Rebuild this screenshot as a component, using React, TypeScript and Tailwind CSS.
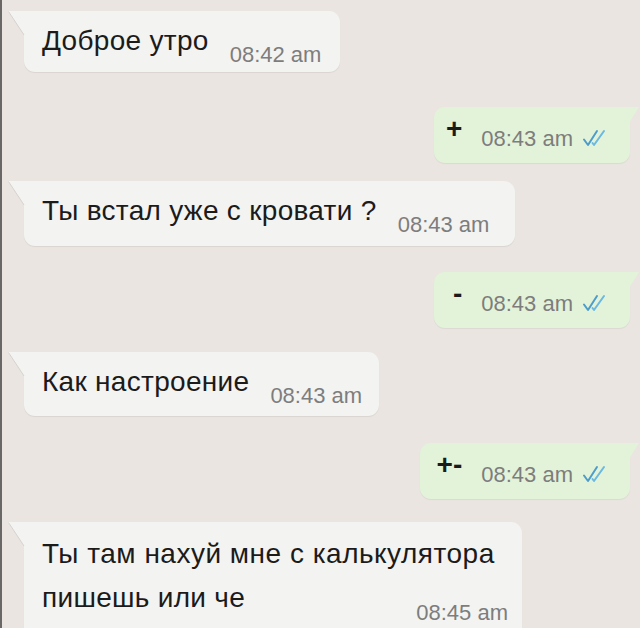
import React from "react";

function Checks() {
  return (
    <svg width="26" height="18" viewBox="0 0 26 18" fill="none" className="shrink-0">
      <path d="M2 10.5 L6 16 L15 2" stroke="#4e9cc9" strokeWidth="2" strokeLinecap="round" strokeLinejoin="round" />
      <path d="M10.5 14 L12 16 L22 2" stroke="#6bb8e0" strokeWidth="2" strokeLinecap="round" strokeLinejoin="round" />
    </svg>
  );
}

function Tail() {
  return (
    <svg width="17" height="25" viewBox="0 0 17 25" className="absolute left-[-16px] top-0">
      <path d="M0 0 L17 0 L17 25 Z" fill="#f3f3f2" />
      <path d="M0.5 0.5 L16 24" stroke="#d6d2cf" strokeWidth="1" />
    </svg>
  );
}

function Left({
  text,
  time,
  h,
  mt,
  pr,
}: {
  text: string;
  time: string;
  h: string;
  mt: string;
  pr: string;
}) {
  return (
    <div className={`flex pl-[22px] ${mt}`}>
      <div
        className={`relative flex items-start bg-[#f3f3f2] rounded-[11px] rounded-tl-none pl-[18px] pt-[14px] ${pr} ${h} shadow-[0_1px_1px_rgba(0,0,0,0.07)]`}
      >
        <Tail />
        <span className="text-[28px] leading-[32px] tracking-[0.3px] text-[#1b1b1b] whitespace-nowrap">{text}</span>
        <span className="ml-[21px] mt-[18px] text-[22px] leading-[24px] text-[#7d7d7d] whitespace-nowrap">
          {time}
        </span>
      </div>
    </div>
  );
}

function Right({ sign, mt, pl }: { sign: string; mt: string; pl: string }) {
  return (
    <div className={`flex justify-end pr-[10px] ${mt}`}>
      <div
        className={`relative flex items-start h-[56px] bg-[#e3f3d9] rounded-[11px] rounded-tr-none pt-[8px] pr-[22px] ${pl} shadow-[0_1px_1px_rgba(0,0,0,0.06)]`}
      >
        <svg width="10" height="16" viewBox="0 0 10 16" className="absolute right-[-9px] top-0">
          <path d="M0 0 L10 0 L0 16 Z" fill="#e3f3d9" />
        </svg>
        <span className="text-[28px] leading-[27px] font-bold text-[#1b1b1b] whitespace-nowrap">{sign}</span>
        <span className="ml-[19px] mt-[12px] text-[22px] leading-[24px] text-[#7d7d7d] whitespace-nowrap">
          08:43 am
        </span>
        <span className="ml-[9px] mt-[14px]">
          <Checks />
        </span>
      </div>
    </div>
  );
}

export default function App() {
  return (
    <div
      className="w-[640px] h-[628px] overflow-hidden bg-[#eae5e1] border-l-[2px] border-[#6a6866] flex flex-col pt-[11px]"
      style={{ fontFamily: '"Liberation Sans", Arial, sans-serif' }}
    >
      <Left text="Доброе утро" time="08:42 am" h="h-[61px]" mt="mt-0" pr="pr-[19px]" />
      <Right sign="+" mt="mt-[35px]" pl="pl-[12px]" />
      <Left text="Ты встал уже с кровати ?" time="08:43 am" h="h-[65px]" mt="mt-[18px]" pr="pr-[26px]" />
      <Right sign="-" mt="mt-[26px]" pl="pl-[19px]" />
      <Left text="Как настроение" time="08:43 am" h="h-[64px]" mt="mt-[24px]" pr="pr-[17px]" />
      <Right sign="+-" mt="mt-[27px]" pl="pl-[17px]" />
      <div className="flex pl-[22px] mt-[23px]">
        <div className="relative flex flex-col w-[498px] bg-[#f3f3f2] rounded-[11px] rounded-tl-none pl-[18px] pr-[14px] pt-[10px] pb-[20px] shadow-[0_1px_1px_rgba(0,0,0,0.07)]">
          <Tail />
          <span className="text-[28px] leading-[44px] tracking-[0.5px] text-[#1b1b1b] whitespace-nowrap">
            Ты там нахуй мне с калькулятора
          </span>
          <div className="flex items-start justify-between">
            <span className="text-[28px] leading-[44px] tracking-[0.3px] text-[#1b1b1b] whitespace-nowrap">
              пишешь или че
            </span>
            <span className="mt-[25px] text-[22px] leading-[24px] text-[#7d7d7d] whitespace-nowrap">08:45 am</span>
          </div>
        </div>
      </div>
    </div>
  );
}
